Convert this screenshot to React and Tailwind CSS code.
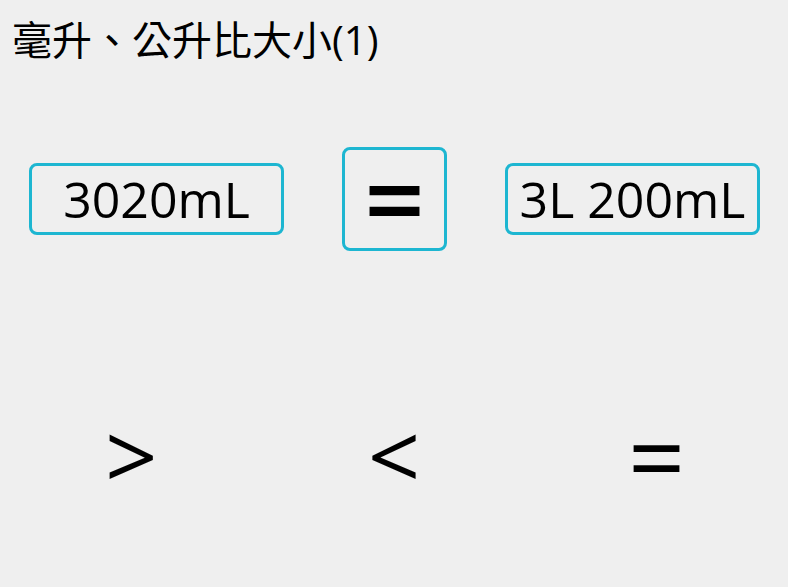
import React from 'react';

const font = { fontFamily: '"Open Sans", "Noto Sans CJK TC", sans-serif' };

const ValueBox = ({ children }) => (
    <div className="w-[255px] h-[72px] rounded-lg border-[3px] border-[#1db6d1] flex items-center justify-center text-[50px] leading-none text-black">
        {children}
    </div>
);

export default function App() {
    return (
        <div className="w-[788px] h-[587px] bg-[#efefef] flex flex-col" style={font}>
            <h1 className="pl-[12px] pt-[16px] text-[40px] leading-[48px] text-black font-normal">毫升、公升比大小(1)</h1>

            <div className="mt-[83px] pl-[29px] pr-[28px] flex items-center justify-between">
                <ValueBox>3020mL</ValueBox>
                <div className="w-[105px] h-[104px] rounded-lg border-[3px] border-[#1db6d1] flex items-center justify-center text-[106px] font-semibold leading-none text-black pb-[2px]">
                    =
                </div>
                <ValueBox>3L 200mL</ValueBox>
            </div>

            <div className="mt-[154px] grid grid-cols-3 h-[100px] items-center leading-none text-black">
                <button className="flex justify-center text-[92px]">&gt;</button>
                <button className="flex justify-center text-[92px]">&lt;</button>
                <button className="flex justify-center text-[100px]">=</button>
            </div>
        </div>
    );
}
